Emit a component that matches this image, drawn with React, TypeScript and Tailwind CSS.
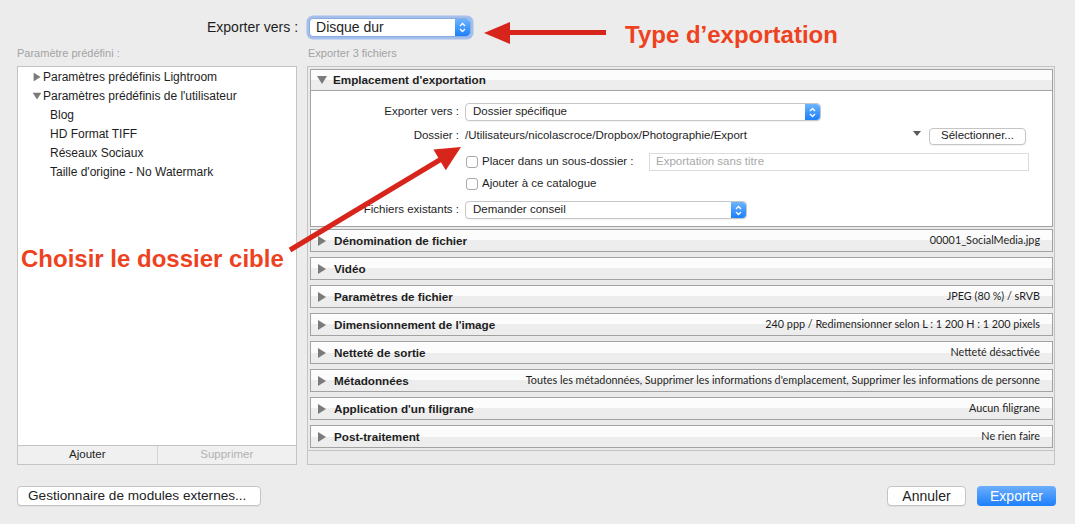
import React from 'react';

const sections = [
  { title: 'Dénomination de fichier', summary: '00001_SocialMedia.jpg' },
  { title: 'Vidéo', summary: '' },
  { title: 'Paramètres de fichier', summary: 'JPEG (80 %) / sRVB' },
  { title: "Dimensionnement de l'image", summary: '240 ppp / Redimensionner selon L : 1 200 H : 1 200 pixels' },
  { title: 'Netteté de sortie', summary: 'Netteté désactivée' },
  {
    title: 'Métadonnées',
    summary:
      "Toutes les métadonnées, Supprimer les informations d'emplacement, Supprimer les informations de personne",
  },
  { title: "Application d'un filigrane", summary: 'Aucun filigrane' },
  { title: 'Post-traitement', summary: 'Ne rien faire' },
];

function TriRight({ className = '' }: { className?: string }) {
  return (
    <svg width="8" height="10" viewBox="0 0 8 10" className={className}>
      <path d="M0 0 L8 5 L0 10 Z" fill="#7b7b7b" />
    </svg>
  );
}

function TriDown({ className = '' }: { className?: string }) {
  return (
    <svg width="10" height="8" viewBox="0 0 10 8" className={className}>
      <path d="M0 0 L10 0 L5 8 Z" fill="#7b7b7b" />
    </svg>
  );
}

function Stepper() {
  return (
    <div className="flex w-[15px] items-center justify-center rounded-r-[4px] bg-[linear-gradient(to_bottom,#6db4fc,#1b80fb)]">
      <svg width="7" height="11" viewBox="0 0 7 11">
        <path d="M1 4 L3.5 1.5 L6 4 M1 7 L3.5 9.5 L6 7" stroke="#fff" strokeWidth="1.3" fill="none" />
      </svg>
    </div>
  );
}

function Select({ value, className = '' }: { value: string; className?: string }) {
  return (
    <div
      className={`flex h-[18px] items-stretch rounded-[4px] border border-[#c6c6c6] bg-white shadow-[0_1px_1px_rgba(0,0,0,0.05)] ${className}`}
    >
      <div className="flex flex-1 items-center pl-[7px] text-[11.5px] text-[#1e1e1e]">{value}</div>
      <Stepper />
    </div>
  );
}

function Checkbox() {
  return <div className="h-[12px] w-[12px] rounded-[3px] border border-[#a9a9a9] bg-white" />;
}

function MacButton({ children, className = '' }: { children: React.ReactNode; className?: string }) {
  return (
    <div
      className={`flex items-center justify-center rounded-[4px] border border-[#c4c4c4] bg-white text-[#222] shadow-[0_1px_0_rgba(0,0,0,0.05)] ${className}`}
    >
      {children}
    </div>
  );
}

export default function App() {
  return (
    <div className="relative flex h-[524px] w-[1075px] flex-col overflow-hidden bg-[#ececec] pt-[18px] font-['Liberation_Sans',Arial,sans-serif] text-[#1e1e1e]">
      {/* Exporter vers */}
      <div className="flex h-[19px] items-center gap-[11px] pl-[207px]">
        <span className="text-[14px]">Exporter vers :</span>
        <div className="flex h-[19px] w-[162px] items-stretch rounded-[4px] border border-[#8aa9de] bg-white shadow-[0_0_0_2.5px_rgba(106,154,236,0.55)]">
          <div className="flex flex-1 items-center pl-[6px] text-[14px]">Disque dur</div>
          <Stepper />
        </div>
      </div>

      <div className="mt-[9px] flex">
        {/* Presets */}
        <div className="ml-[17px] flex w-[280px] flex-col">
          <div className="mb-[6px] h-[14px] text-[11px] leading-[14px] text-[#a3a3a3]">Paramètre prédéfini :</div>
          <div className="flex h-[399px] flex-col border border-[#c4c4c4] bg-white">
            <div className="flex-1 text-[12px]">
              <div className="flex h-[19px] items-center pl-[15px]">
                <TriRight className="mr-[2px] scale-90" />
                Paramètres prédéfinis Lightroom
              </div>
              <div className="flex h-[19px] items-center pl-[14px]">
                <TriDown className="mr-px scale-90" />
                Paramètres prédéfinis de l'utilisateur
              </div>
              {['Blog', 'HD Format TIFF', 'Réseaux Sociaux', "Taille d'origine - No Watermark"].map((p) => (
                <div key={p} className="flex h-[19px] items-center pl-[32px]">
                  {p}
                </div>
              ))}
            </div>
            <div className="flex h-[19px] border-t border-[#c4c4c4] bg-[#f0f0f0] text-[11.5px]">
              <div className="flex flex-1 items-center justify-center border-r border-[#d4d4d4]">Ajouter</div>
              <div className="flex flex-1 items-center justify-center text-[#b0b0b0]">Supprimer</div>
            </div>
          </div>
        </div>

        {/* Export settings */}
        <div className="ml-[10px] flex w-[748px] flex-col">
          <div className="mb-[6px] h-[14px] pl-px text-[11px] leading-[14px] text-[#a3a3a3]">Exporter 3 fichiers</div>
          <div className="flex h-[399px] flex-col border border-[#c4c4c4] bg-[#eaeaea]">
            <div className="flex flex-col border-b border-[#c4c4c4] pb-[2px] pl-[2px] pr-px pt-[2px]">
              {/* Emplacement */}
              <div className="border border-[#a2a2a2] bg-white">
                <div className="flex h-[21px] items-center border-b border-[#a2a2a2] bg-[linear-gradient(to_bottom,#fcfcfc_50%,#ededed_50%)] pl-[6px] text-[11.7px] font-bold">
                  <TriDown className="mr-[6px]" />
                  Emplacement d'exportation
                </div>
                <div className="flex flex-col pb-[7px] pt-[12px] text-[11.5px]">
                  <div className="flex h-[18px] items-center">
                    <div className="w-[154px] pr-[6px] text-right">Exporter vers :</div>
                    <Select value="Dossier spécifique" className="w-[356px]" />
                  </div>
                  <div className="mt-[6px] flex h-[18px] items-center">
                    <div className="w-[154px] pr-[6px] text-right">Dossier :</div>
                    <div className="flex-1">/Utilisateurs/nicolascroce/Dropbox/Photographie/Export</div>
                    <svg width="8" height="5" viewBox="0 0 8 5" className="mb-[5px] mr-[8px]">
                      <path d="M0 0 L8 0 L4 5 Z" fill="#5b5b5b" />
                    </svg>
                    <MacButton className="mr-[26px] h-[17px] w-[97px] text-[11.5px]">Sélectionner...</MacButton>
                  </div>
                  <div className="mt-[8px] flex h-[18px] items-center">
                    <div className="w-[155px]" />
                    <Checkbox />
                    <span className="ml-[4px] w-[167px]">Placer dans un sous-dossier :</span>
                    <div className="flex h-[18px] w-[380px] items-center border border-[#dcdcdc] bg-white pl-[6px] text-[#a8a8a8]">
                      Exportation sans titre
                    </div>
                  </div>
                  <div className="mt-[5px] flex h-[16px] items-center">
                    <div className="w-[155px]" />
                    <Checkbox />
                    <span className="ml-[4px]">Ajouter à ce catalogue</span>
                  </div>
                  <div className="mt-[9px] flex h-[18px] items-center">
                    <div className="w-[154px] pr-[6px] text-right">Fichiers existants :</div>
                    <Select value="Demander conseil" className="w-[282px]" />
                  </div>
                </div>
              </div>

              <div className="mt-[2px] flex flex-col gap-[5px]">
                {sections.map((s) => (
                  <div
                    key={s.title}
                    className="flex h-[23px] items-center border border-[#a2a2a2] bg-[linear-gradient(to_bottom,#fcfcfc_50%,#ededed_50%)] pl-[7px] pr-[12px] shadow-[inset_0_1px_0_#fff]"
                  >
                    <TriRight className="mr-[8px]" />
                    <span className="text-[11.7px] font-bold">{s.title}</span>
                    <span className="ml-auto font-['Lato',sans-serif] text-[10.8px] text-[#1e1e1e]">{s.summary}</span>
                  </div>
                ))}
              </div>
            </div>
          </div>
        </div>
      </div>

      {/* Footer */}
      <div className="mt-[21px] flex items-center pl-[17px] pr-[19px]">
        <MacButton className="h-[20px] w-[244px] justify-start pl-[10px] text-[13.6px]">
          Gestionnaire de modules externes...
        </MacButton>
        <MacButton className="ml-auto h-[20px] w-[79px] text-[14px]">Annuler</MacButton>
        <div className="ml-[11px] flex h-[20px] w-[79px] items-center justify-center rounded-[4px] bg-[linear-gradient(to_bottom,#6caefc,#1d7ffb)] text-[14px] text-white">
          Exporter
        </div>
      </div>

      {/* Annotations */}
      <div className="absolute left-[625px] top-[17px] text-[24px] font-bold text-[#ee421f]">Type d’exportation</div>
      <div className="absolute left-[21px] top-[241px] text-[24px] font-bold text-[#ee421f]">Choisir le dossier cible</div>
      <svg className="pointer-events-none absolute left-0 top-0" width="1075" height="524" viewBox="0 0 1075 524">
        <line x1="505" y1="32.5" x2="606" y2="32.5" stroke="#d8251b" strokeWidth="5" />
        <path d="M484 33 L510 22 L510 44 Z" fill="#d8251b" />
        <line x1="290" y1="250" x2="443" y2="158" stroke="#d8251b" strokeWidth="5" />
        <path d="M461 147 L433.4 149.6 L445.8 170.2 Z" fill="#d8251b" />
      </svg>
    </div>
  );
}
